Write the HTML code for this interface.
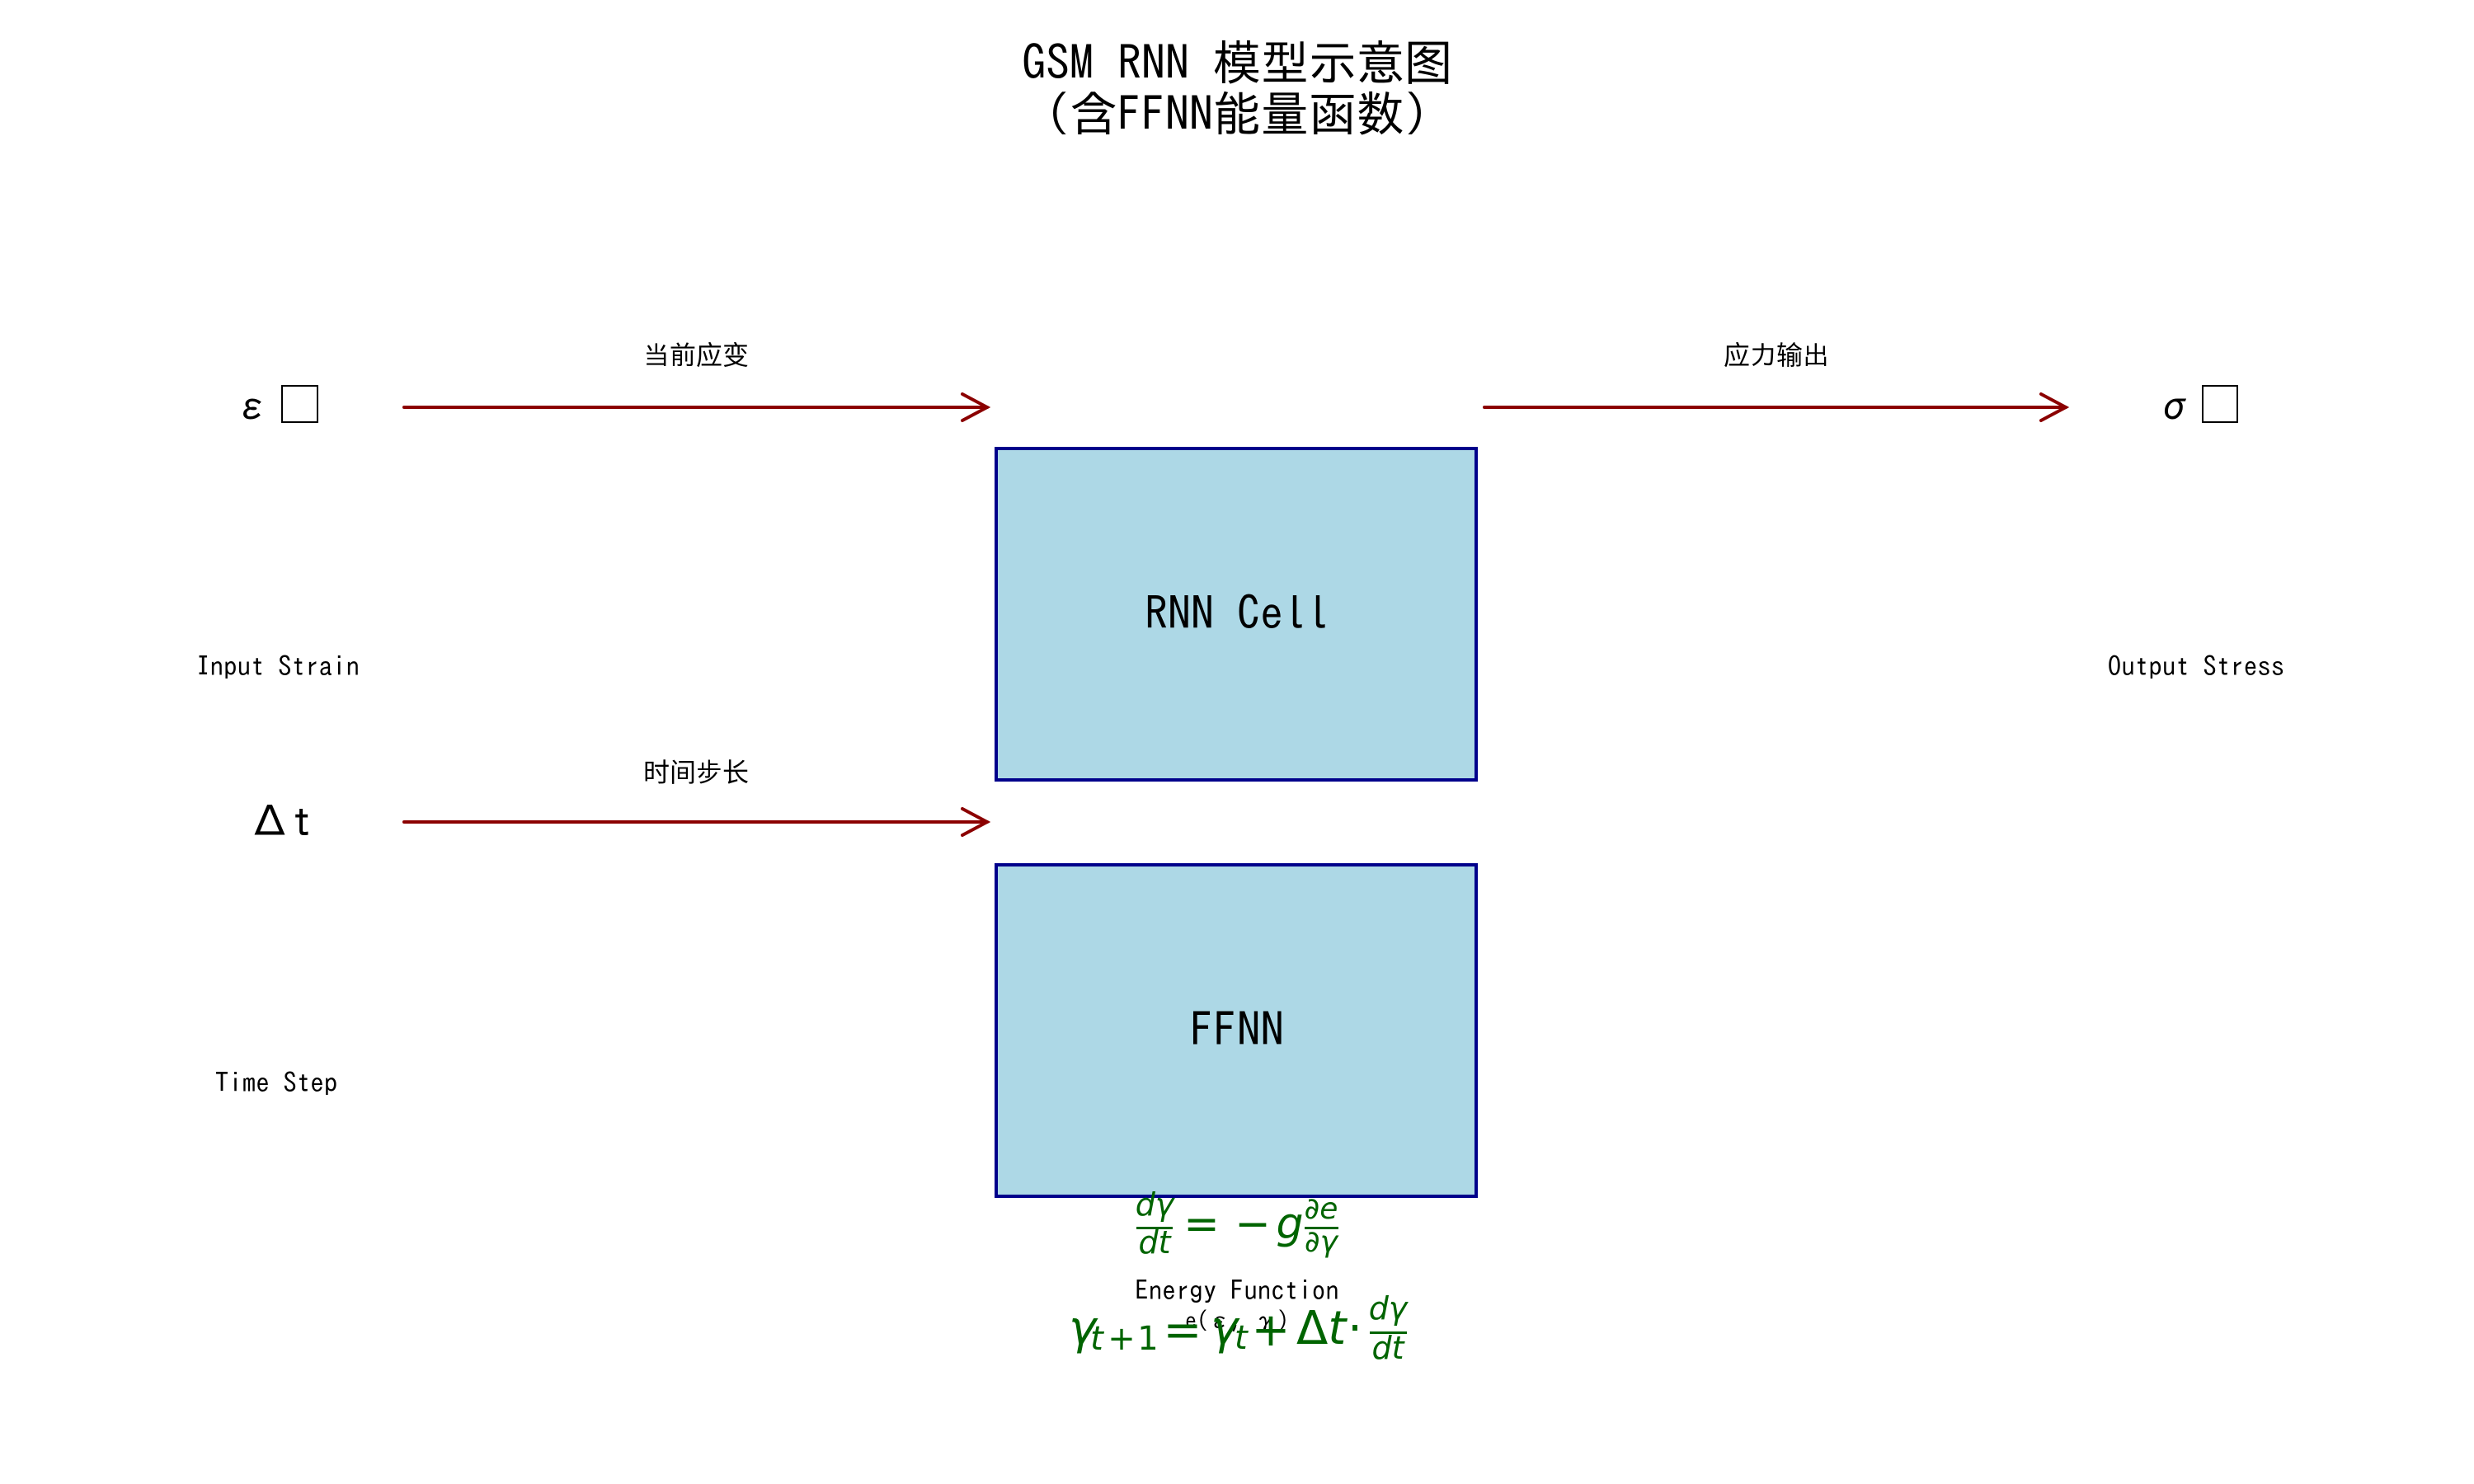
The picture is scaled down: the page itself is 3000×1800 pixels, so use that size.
<!DOCTYPE html>
<html><head><meta charset="utf-8"><style>
html,body{margin:0;padding:0;background:#fff;}
svg{display:block;}
.cj{font-family:"IPAGothic","WenQuanYi Zen Hei",sans-serif;}
.m{font-family:"DejaVu Sans",sans-serif;fill:#006400;}
</style></head><body>
<svg width="3000" height="1800" viewBox="0 0 3000 1800" xmlns="http://www.w3.org/2000/svg">
<rect width="3000" height="1800" fill="#fff"/>
<rect x="1208" y="544" width="582" height="402" fill="#add8e6" stroke="#00008b" stroke-width="4"/>
<rect x="1208" y="1049" width="582" height="402" fill="#add8e6" stroke="#00008b" stroke-width="4"/>
<g class="cj" text-anchor="middle" fill="#000">
<text x="1500" y="97" font-size="58">GSM RNN 模型示意图</text>
<text x="1500" y="159" font-size="58">(含FFNN能量函数)</text>
<text x="306" y="510" font-size="48">ε</text>
<text x="2636" y="510" font-size="48">σ</text>
<text x="844" y="442" font-size="32">当前应变</text>
<text x="2154" y="442" font-size="32">应力输出</text>
<text x="844" y="948" font-size="32">时间步长</text>
<text x="337" y="820" font-size="33">Input Strain</text>
<text x="2663" y="820" font-size="33">Output Stress</text>
<text x="335" y="1325" font-size="33">Time Step</text>
<text x="340" y="1015" font-size="52">Δt</text>
<text x="1500" y="764" font-size="56">RNN Cell</text>
<text x="1500" y="1269" font-size="57">FFNN</text>
<text x="1500" y="1577" font-size="33">Energy Function</text>
<text x="1500" y="1612" font-size="28">e(ε, γ)</text>
</g>
<rect x="342" y="468" width="43" height="44" fill="none" stroke="#000" stroke-width="2"/>
<rect x="2671" y="468" width="42" height="44" fill="none" stroke="#000" stroke-width="2"/>
<g stroke="#8b0000" stroke-width="4" fill="none" stroke-linecap="round">
<line x1="490" y1="494" x2="1197" y2="494"/><polyline points="1167,478 1197,494 1167,510"/>
<line x1="1800" y1="494" x2="2505" y2="494"/><polyline points="2475,478 2505,494 2475,510"/>
<line x1="490" y1="997" x2="1197" y2="997"/><polyline points="1167,981 1197,997 1167,1013"/>
</g>
<g class="m">
<text x="1400" y="1474" font-size="38" font-style="italic" text-anchor="middle">dγ</text>
<rect x="1378" y="1488" width="44" height="3"/>
<text x="1400" y="1520" font-size="38" font-style="italic" text-anchor="middle">dt</text>
<text x="1457" y="1502" font-size="52" text-anchor="middle">=</text>
<text x="1519" y="1502" font-size="52" text-anchor="middle">−</text>
<text x="1564" y="1502" font-size="52" font-style="italic" text-anchor="middle">g</text>
<text x="1602" y="1478" font-size="36" font-style="italic" text-anchor="middle">∂e</text>
<rect x="1582" y="1488" width="41" height="3"/>
<text x="1602" y="1518" font-size="36" font-style="italic" text-anchor="middle">∂γ</text>
<text x="1296" y="1630" font-size="56" font-style="italic">γ</text>
<text x="1330" y="1637" font-size="40" font-style="italic" text-anchor="middle">t</text>
<text x="1360" y="1637" font-size="40" text-anchor="middle">+</text>
<text x="1392" y="1637" font-size="40" text-anchor="middle">1</text>
<text x="1434" y="1632" font-size="56" text-anchor="middle">=</text>
<text x="1468" y="1630" font-size="56" font-style="italic">γ</text>
<text x="1497" y="1636" font-size="40" font-style="italic">t</text>
<text x="1541" y="1632" font-size="56" text-anchor="middle">+</text>
<text x="1572" y="1630" font-size="56">Δ<tspan font-style="italic">t</tspan></text>
<text x="1643" y="1630" font-size="56" text-anchor="middle">·</text>
<text x="1683" y="1600" font-size="38" font-style="italic" text-anchor="middle">dγ</text>
<rect x="1661" y="1615" width="45" height="3"/>
<text x="1683" y="1648" font-size="38" font-style="italic" text-anchor="middle">dt</text>
</g>
</svg>
</body></html>
